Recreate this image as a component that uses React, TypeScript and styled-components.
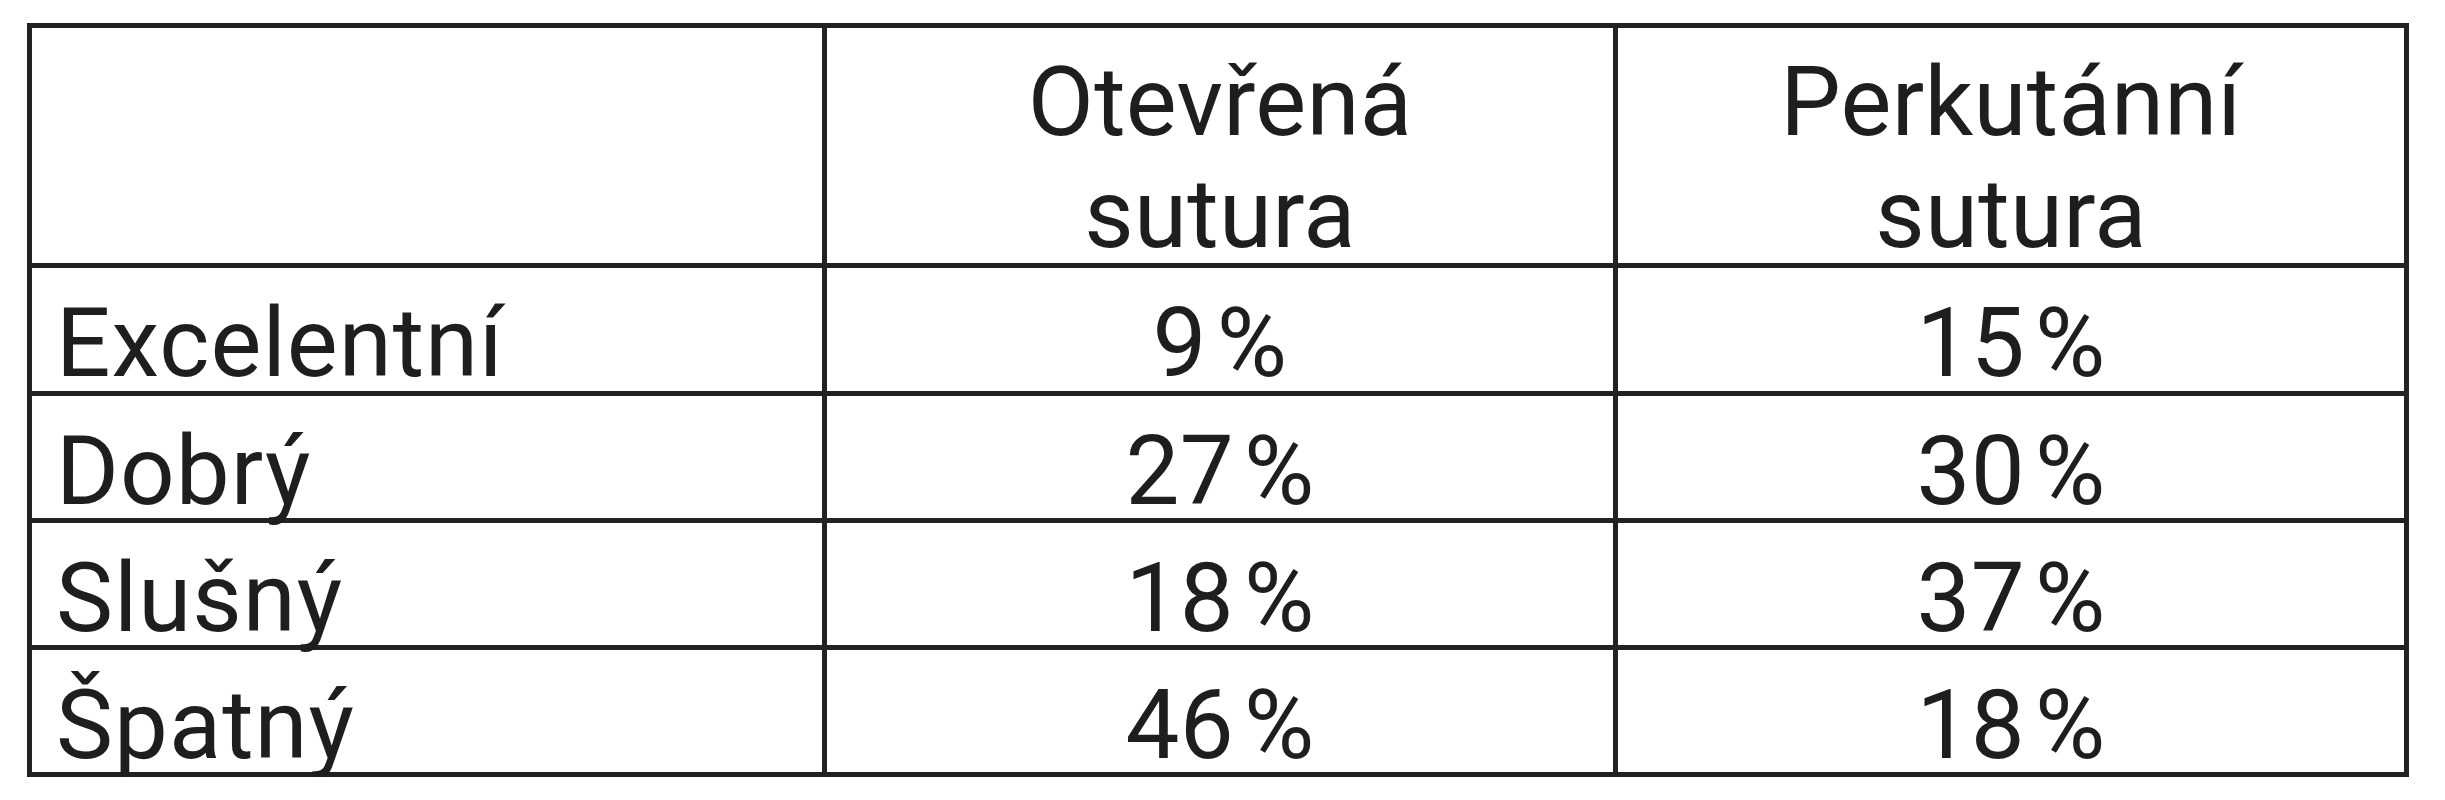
import React from "react";
import styled, { createGlobalStyle } from "styled-components";

const GlobalStyle = createGlobalStyle`
  html, body {
    margin: 0;
    padding: 0;
    background: #ffffff;
  }
  body {
    font-family: Roboto, "Liberation Sans", Arial, sans-serif;
    color: #1e1e1e;
  }
`;

const Page = styled.div`
  padding: 23px 0 0 27px;
`;

const Grid = styled.div`
  display: grid;
  grid-template-columns: 795px 791px 791px;
  grid-template-rows: 240px 128px 127px 127px 127px;
  width: max-content;
  border-top: 5px solid #222;
  border-left: 5px solid #222;
`;

const Cell = styled.div<{ $head?: boolean; $center?: boolean }>`
  box-sizing: border-box;
  border-right: 5px solid #222;
  border-bottom: 5px solid #222;
  font-size: 96px;
  line-height: normal;
  font-weight: 400;
  white-space: nowrap;
  overflow: visible;
  padding-top: ${(p) => (p.$head ? "18px" : "19px")};
  padding-left: ${(p) => (p.$center ? "0" : "24px")};
  text-align: ${(p) => (p.$center ? "center" : "left")};
  letter-spacing: ${(p) => (p.$center ? "0.3px" : "1px")};
  word-spacing: ${(p) => (p.$center && !p.$head ? "-14px" : "normal")};
`;

const rows: [string, string, string][] = [
  ["Excelentní", "9 %", "15 %"],
  ["Dobrý", "27 %", "30 %"],
  ["Slušný", "18 %", "37 %"],
  ["Špatný", "46 %", "18 %"],
];

export default function App() {
  return (
    <>
      <GlobalStyle />
      <Page>
        <Grid>
          <Cell $head />
          <Cell $head $center>
            Otevřená
            <br />
            sutura
          </Cell>
          <Cell $head $center>
            Perkutánní
            <br />
            sutura
          </Cell>
          {rows.map(([label, a, b]) => (
            <React.Fragment key={label}>
              <Cell>{label}</Cell>
              <Cell $center>{a}</Cell>
              <Cell $center>{b}</Cell>
            </React.Fragment>
          ))}
        </Grid>
      </Page>
    </>
  );
}
